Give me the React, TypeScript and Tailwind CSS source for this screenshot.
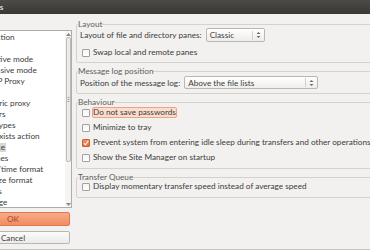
import type { ReactNode } from 'react'

interface TreeItem {
  label: string
  level: 0 | 1 | 2
  selected?: boolean
}

const treeItems: TreeItem[] = [
  { label: 'Connection', level: 0 },
  { label: 'FTP', level: 1 },
  { label: 'Active mode', level: 2 },
  { label: 'Passive mode', level: 2 },
  { label: 'FTP Proxy', level: 2 },
  { label: 'SFTP', level: 1 },
  { label: 'Generic proxy', level: 1 },
  { label: 'Transfers', level: 0 },
  { label: 'File Types', level: 1 },
  { label: 'File exists action', level: 1 },
  { label: 'Interface', level: 0, selected: true },
  { label: 'Themes', level: 1 },
  { label: 'Date/time format', level: 1 },
  { label: 'Filesize format', level: 1 },
  { label: 'File lists', level: 0 },
  { label: 'Language', level: 0 },
]

const indent = {
  0: 'pl-[15px]',
  1: 'pl-[22px]',
  2: 'pl-[30px]',
}

const SpinArrows = () => (
  <svg width="5" height="8" viewBox="0 0 5 8" className="mx-[3px]">
    <path d="M0.5 3 L2.5 1 L4.5 3 Z" fill="#6d6b67" />
    <path d="M0.5 5 L2.5 7 L4.5 5 Z" fill="#6d6b67" />
  </svg>
)

const Combo = ({ value, className }: { value: string; className: string }) => (
  <div
    className={`flex items-center rounded-[2px] border border-[#b9b7b3] bg-gradient-to-b from-white to-[#eeedeb] ${className}`}
  >
    <span className="flex-1 pl-[3px] leading-[10px] text-[#3c3c3c]">{value}</span>
    <span className="h-[9px] w-px bg-[#d3d1cd]" />
    <SpinArrows />
  </div>
)

const CheckBox = ({ checked }: { checked?: boolean }) =>
  checked ? (
    <span className="flex h-[8px] w-[8px] items-center justify-center rounded-[1px] border border-[#c8602f] bg-gradient-to-b from-[#f59167] to-[#e3683a]">
      <svg width="6" height="6" viewBox="0 0 6 6">
        <path d="M0.8 3.2 L2.4 4.8 L5.3 0.9" stroke="#fff6f0" strokeWidth="1.1" fill="none" />
      </svg>
    </span>
  ) : (
    <span className="h-[8px] w-[8px] rounded-[1px] border border-[#a3a19d] bg-gradient-to-b from-[#f4f4f3] to-white" />
  )

const CheckRow = ({ label, checked, focused }: { label: string; checked?: boolean; focused?: boolean }) => (
  <div className="flex h-[15px] items-center pl-[4px]">
    <CheckBox checked={checked} />
    <span
      className={`ml-[2px] whitespace-nowrap rounded-[2px] border leading-[9px] text-[#3c3c3c] ${
        focused ? 'border-[#eca487] bg-[#fbdccd]' : 'border-transparent'
      }`}
    >
      {label}
    </span>
  </div>
)

const GroupBox = ({ title, className, children }: { title: string; className?: string; children: ReactNode }) => (
  <fieldset className={`min-w-0 rounded-[2px] border border-[#d4d2cd] px-[1px] ${className ?? ''}`}>
    <legend className="px-0 leading-[10px] text-[#5f5e5a]">{title}</legend>
    {children}
  </fieldset>
)

export default function App() {
  return (
    <div className="flex h-[250px] w-[370px] flex-col overflow-hidden border-b border-[#c9c7c3] bg-[#f2f1f0] font-['Lato',sans-serif] text-[8.2px] text-[#3c3c3c]">
      <div className="flex h-[14px] shrink-0 items-center bg-gradient-to-b from-[#4c4b47] to-[#393834]">
        <span className="-ml-[26px] whitespace-nowrap font-bold text-[#dfdbd2]">Settings</span>
      </div>

      <div className="flex flex-1">
        {/* page tree + buttons */}
        <div className="-ml-[44px] flex w-[116px] shrink-0 flex-col">
          <div className="mt-[16px] flex h-[178px] border border-[#aeaca8] bg-white">
            <div className="flex-1 overflow-hidden pt-[1px]">
              {treeItems.map((item) => (
                <div key={item.label} className={`flex h-[11px] items-center whitespace-nowrap ${indent[item.level]}`}>
                  <span className={item.selected ? 'bg-[#d8d7d4] px-[1px] leading-[9px]' : 'px-[1px] leading-[9px]'}>
                    {item.label}
                  </span>
                </div>
              ))}
            </div>
            <div className="flex w-[6px] flex-col items-center bg-[#f5f5f4]">
              <svg width="5" height="3" viewBox="0 0 5 3" className="mt-[2px]">
                <path d="M0 3 L2.5 0 L5 3 Z" fill="#8a8884" />
              </svg>
              <div className="mt-[1px] flex h-[125px] w-[5px] items-center justify-center rounded-[2px] border border-[#bdbbb7] bg-[#eceae8]">
                <svg width="3" height="5" viewBox="0 0 3 5">
                  <path d="M0.5 0.5 H2.5 M0.5 2.5 H2.5 M0.5 4.5 H2.5" stroke="#a8a6a2" strokeWidth="1" />
                </svg>
              </div>
              <div className="flex-1" />
              <svg width="5" height="3" viewBox="0 0 5 3" className="mb-[1px]">
                <path d="M0 0 L2.5 3 L5 0 Z" fill="#8a8884" />
              </svg>
            </div>
          </div>

          <button
            type="button"
            className="mt-[4px] h-[14px] w-[114px] rounded-[2px] border border-[#e0764c] bg-gradient-to-b from-[#f8ab89] to-[#f08c62] leading-[10px] text-[#9a4d30]"
          >
            OK
          </button>
          <button
            type="button"
            className="mt-[5px] h-[13px] w-[114px] rounded-[2px] border border-[#b8b6b2] bg-gradient-to-b from-[#fbfbfb] to-[#ecebea] leading-[10px] text-[#3c3c3c]"
          >
            Cancel
          </button>
        </div>

        {/* settings page */}
        <div className="ml-[4px] flex w-[320px] shrink-0 flex-col gap-[3px] pt-[5px]">
          <GroupBox title="Layout" className="pb-[2px]">
            <div className="-mt-[1px] flex items-center pl-[2px]">
              <span className="whitespace-nowrap leading-[10px]">Layout of file and directory panes:</span>
              <Combo value="Classic" className="ml-[4px] h-[14px] w-[59px]" />
            </div>
            <div className="mt-[3px]">
              <CheckRow label="Swap local and remote panes" />
            </div>
          </GroupBox>

          <GroupBox title="Message log position" className="pb-[4px]">
            <div className="flex items-center pl-[2px]">
              <span className="whitespace-nowrap leading-[10px]">Position of the message log:</span>
              <Combo value="Above the file lists" className="ml-[4px] h-[13px] w-[134px]" />
            </div>
          </GroupBox>

          <GroupBox title="Behaviour" className="pb-[3px]">
            <div className="-mt-[2px]">
              <CheckRow label="Do not save passwords" focused />
              <CheckRow label="Minimize to tray" />
              <CheckRow label="Prevent system from entering idle sleep during transfers and other operations" checked />
              <CheckRow label="Show the Site Manager on startup" />
            </div>
          </GroupBox>

          <GroupBox title="Transfer Queue" className="pb-[3px]">
            <div className="-mt-[3px]">
              <CheckRow label="Display momentary transfer speed instead of average speed" />
            </div>
          </GroupBox>
        </div>
      </div>
    </div>
  )
}
